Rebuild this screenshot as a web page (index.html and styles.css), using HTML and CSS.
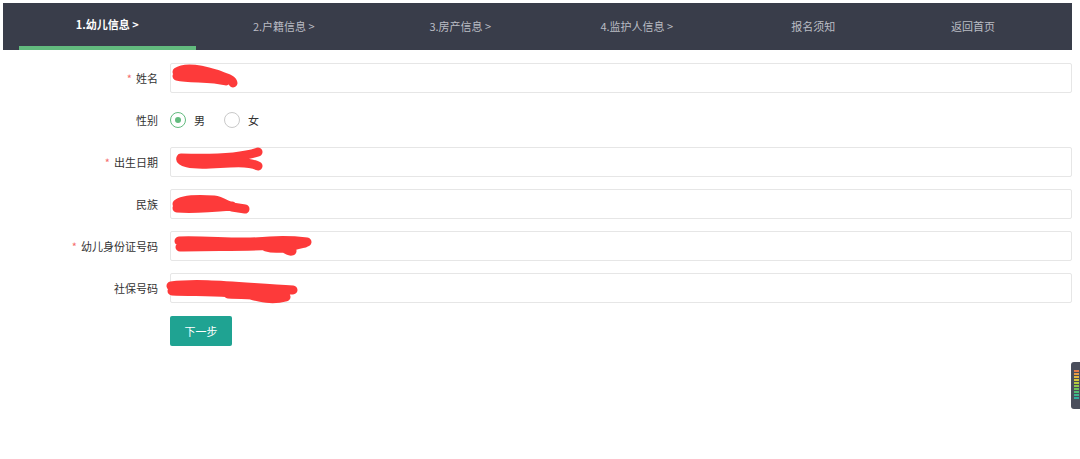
FILE: index.html
```html
<!DOCTYPE html>
<html lang="zh-CN">
  <head>
    <meta charset="UTF-8" />
    <meta name="viewport" content="width=device-width, initial-scale=1.0" />
    <title>幼儿信息</title>
    <link rel="stylesheet" href="styles.css">
  </head>
  <body>
    <div class="page">
      <div class="nav">
        <div class="nav-item active">1.幼儿信息 &gt;</div>
        <div class="nav-item">2.户籍信息 &gt;</div>
        <div class="nav-item">3.房产信息 &gt;</div>
        <div class="nav-item">4.监护人信息 &gt;</div>
        <div class="nav-item">报名须知</div>
        <div class="nav-item last">返回首页</div>
      </div>

      <div class="form">
        <div class="form-row">
          <label class="form-label required">姓名</label>
          <div class="form-field">
            <input type="text" class="form-input" />
            <svg class="scribble" width="120" height="30" viewBox="0 0 120 30">
              <path d="M7 9 C 14 4, 30 6, 46 11 C 56 15, 62 16, 63 20 M7 13 C 20 16, 40 14, 56 18" />
            </svg>
          </div>
        </div>

        <div class="form-row">
          <label class="form-label">性别</label>
          <div class="form-field radios">
            <label class="radio checked"><span class="radio-dot"></span>男</label>
            <label class="radio"><span class="radio-dot"></span>女</label>
          </div>
        </div>

        <div class="form-row">
          <label class="form-label required">出生日期</label>
          <div class="form-field">
            <input type="text" class="form-input" />
            <svg class="scribble" width="120" height="30" viewBox="0 0 120 30">
              <path d="M88 5 C 70 11, 40 12, 11 11 C 9 15, 20 18, 40 17 L 60 16 C 75 15, 84 17, 88 19" />
            </svg>
          </div>
        </div>

        <div class="form-row">
          <label class="form-label">民族</label>
          <div class="form-field">
            <input type="text" class="form-input" />
            <svg class="scribble" width="120" height="30" viewBox="0 0 120 30">
              <path d="M7 15 C 12 10, 30 10, 44 11 C 52 12, 56 16, 62 18 L 75 20 M7 19 C 20 20, 40 19, 62 17" />
            </svg>
          </div>
        </div>

        <div class="form-row">
          <label class="form-label required">幼儿身份证号码</label>
          <div class="form-field">
            <input type="text" class="form-input" />
            <svg class="scribble" width="160" height="30" viewBox="0 0 160 30">
              <path d="M9 10 C 40 9, 70 13, 100 10 C 115 9, 128 10, 137 11 M10 16 C 40 15, 80 16, 110 14 C 116 18, 119 21, 122 20 M96 16 C 110 20, 125 14, 135 12" />
            </svg>
          </div>
        </div>

        <div class="form-row">
          <label class="form-label">社保号码</label>
          <div class="form-field">
            <input type="text" class="form-input" />
            <svg class="scribble" width="160" height="34" viewBox="0 0 160 34">
              <path d="M1 13 C 30 9, 70 14, 123 17 M2 18 C 30 19, 60 18, 80 22 C 96 26, 104 27, 116 24 C 100 22, 80 22, 58 21" />
            </svg>
          </div>
        </div>

        <div class="form-row">
          <div class="form-label"></div>
          <div class="form-field">
            <button class="next-btn">下一步</button>
          </div>
        </div>
      </div>
    </div>

    <div class="side-tool">
      <span class="bar b1"></span>
      <span class="bar b2"></span>
      <span class="bar b3"></span>
      <span class="bar b4"></span>
      <span class="bar b5"></span>
      <span class="bar b6"></span>
      <span class="bar b7"></span>
      <span class="bar b8"></span>
      <span class="bar b9"></span>
      <span class="bar b10"></span>
    </div>
  </body>
</html>
```

FILE: styles.css
```css
body {
  font-family: "Noto Sans CJK SC", "Liberation Sans", sans-serif;
  margin: 0;
  padding: 0;
  background-color: #fff;
  color: #333;
  font-size: 11px;
}

.page {
  padding: 3px 8px 0 3px;
}

.nav {
  display: flex;
  height: 47px;
  padding-left: 16px;
  background-color: #393d4a;
}

.nav-item {
  width: 176.5px;
  line-height: 47px;
  text-align: center;
  color: #b9bcc4;
  font-size: 11px;
  box-sizing: border-box;
}

.nav-item.active {
  color: #fff;
  font-weight: 600;
  border-bottom: 4px solid #62bb7e;
  line-height: 43px;
}

.nav-item.last {
  width: 143px;
}

/* 表单 */
.form {
  display: flex;
  flex-direction: column;
  gap: 12px;
  padding-top: 13px;
}

.form-row {
  display: flex;
  align-items: center;
  min-height: 30px;
}

.form-label {
  width: 155px;
  padding-right: 12px;
  text-align: right;
  color: #333;
  font-size: 11px;
}

.form-label.required:before {
  content: "*";
  color: #f56c6c;
  margin-right: 4px;
}

.form-field {
  flex: 1;
  position: relative;
}

.form-input {
  display: block;
  width: 100%;
  height: 30px;
  box-sizing: border-box;
  border: 1px solid #e6e6e6;
  border-radius: 2px;
  background: #fff;
}

.scribble {
  position: absolute;
  left: 0;
  top: 0;
  overflow: visible;
  pointer-events: none;
}

.scribble path {
  fill: none;
  stroke: #fd3a3a;
  stroke-width: 9;
  stroke-linecap: round;
  stroke-linejoin: round;
}

.radios {
  display: flex;
  align-items: center;
  gap: 19px;
}

.radio {
  display: flex;
  align-items: center;
  font-size: 11px;
  color: #333;
}

.radio-dot {
  width: 14px;
  height: 14px;
  border: 1px solid #c9c9c9;
  border-radius: 50%;
  margin-right: 8px;
  position: relative;
}

.radio.checked .radio-dot {
  border-color: #62bb7e;
}

.radio.checked .radio-dot:after {
  content: "";
  position: absolute;
  left: 4px;
  top: 4px;
  width: 6px;
  height: 6px;
  border-radius: 50%;
  background-color: #62bb7e;
}

.next-btn {
  margin-top: 1px;
  width: 62px;
  height: 30px;
  border: none;
  border-radius: 2px;
  background-color: #1fa392;
  color: #fff;
  font-family: "Noto Sans CJK SC", sans-serif;
  font-size: 11px;
  cursor: pointer;
}

/* 右侧悬浮条 */
.side-tool {
  position: fixed;
  right: 0;
  top: 362px;
  width: 9px;
  height: 47px;
  background-color: #4a4e5b;
  border-radius: 3px 0 0 3px;
  display: flex;
  flex-direction: column;
  align-items: flex-end;
  gap: 1px;
  padding-top: 8px;
  box-sizing: border-box;
}

.bar {
  width: 5px;
  height: 2px;
  margin-right: 1px;
}

.b1 { background: #e37a4a; }
.b2 { background: #e89a45; }
.b3 { background: #e5b83f; }
.b4 { background: #d4c83c; }
.b5 { background: #b6cb3f; }
.b6 { background: #93c84a; }
.b7 { background: #6fc35a; }
.b8 { background: #4fbd72; }
.b9 { background: #3cb58c; }
.b10 { background: #32ad9e; }
```
